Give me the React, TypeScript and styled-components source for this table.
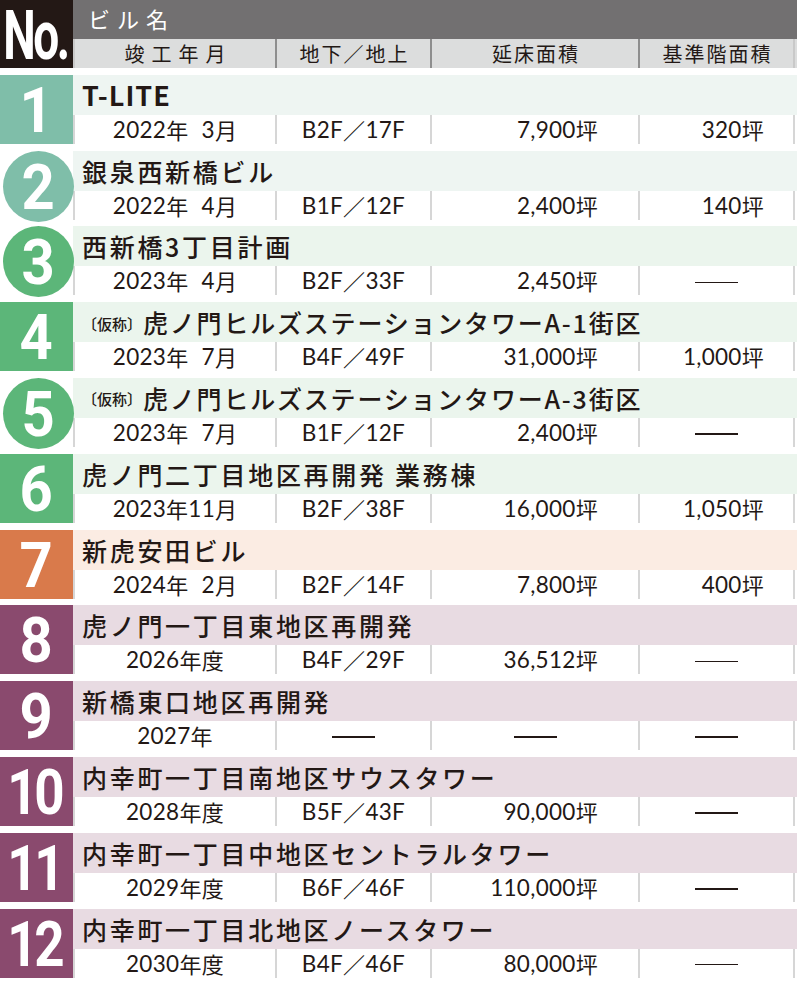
import React from 'react';
import styled, { createGlobalStyle } from 'styled-components';

const GlobalStyle = createGlobalStyle`
  html, body { margin: 0; padding: 0; background: #ffffff; }
  body {
    font-family: "Noto Sans CJK JP", "Noto Sans", sans-serif;
    color: #231815;
  }
`;

type Tone = 'teal' | 'green' | 'orange' | 'purple';

const palette: Record<Tone, { solid: string; tint: string }> = {
  teal: { solid: '#7fbea9', tint: '#eef5f2' },
  green: { solid: '#5cb679', tint: '#ebf5ed' },
  orange: { solid: '#d97a4b', tint: '#fbece3' },
  purple: { solid: '#8a4a6e', tint: '#e8dbe2' },
};

const COLS = '202px 155px 208px 157px';

const Table = styled.div`
  width: 797px;
  display: flex;
  flex-direction: column;
`;

const Header = styled.div`
  display: grid;
  grid-template-columns: 73px 724px;
  height: 68px;
`;

const NoCell = styled.div`
  background: #231815;
  display: flex;
  align-items: flex-end;
  justify-content: center;
  box-sizing: border-box;
`;

const NoText = styled.span`
  display: inline-block;
  font-family: Roboto, "Liberation Sans", sans-serif;
  font-weight: 700;
  font-size: 46px;
  line-height: 0.9;
  color: #ffffff;
  letter-spacing: -2.5px;
  transform: scaleY(1.5);
  transform-origin: center bottom;
  white-space: nowrap;
  margin-left: -2px;
  padding-bottom: 1px;
`;

const HeadRight = styled.div`
  display: flex;
  flex-direction: column;
`;

const TopBar = styled.div`
  height: 39px;
  background: #727071;
  color: #ffffff;
  font-size: 22px;
  letter-spacing: 7px;
  padding-left: 15px;
  display: flex;
  align-items: center;
  padding-bottom: 3px;
  box-sizing: border-box;
`;

const SubHead = styled.div`
  display: grid;
  grid-template-columns: ${COLS};
  height: 29px;
  background: #dcdddd;
`;

const SubHeadCell = styled.div<{ $wide?: boolean }>`
  border-left: 2px solid #8e8e8e;
  display: flex;
  align-items: center;
  justify-content: center;
  font-size: 20px;
  letter-spacing: ${(p) => (p.$wide ? '7px' : '2px')};
  padding-left: ${(p) => (p.$wide ? '7px' : '2px')};
  &:first-child { border-left-color: #c9c9c9; }
  &:last-child { border-right: 2px solid #c9c9c9; }
`;

const Rows = styled.div`
  display: flex;
  flex-direction: column;
  gap: 6.8px;
  padding-top: 6.8px;
`;

const Row = styled.div`
  display: grid;
  grid-template-columns: 73px 724px;
  height: 69px;
`;

const BadgeCell = styled.div<{ $tone: Tone; $circle: boolean }>`
  position: relative;
  z-index: 1;
  background: ${(p) => (p.$circle ? 'transparent' : palette[p.$tone].solid)};
  display: flex;
  align-items: center;
  justify-content: ${(p) => (p.$circle ? 'flex-start' : 'center')};
`;

const Circle = styled.div<{ $tone: Tone }>`
  width: 71px;
  height: 71px;
  flex: none;
  margin-left: 3px;
  border-radius: 50%;
  background: ${(p) => palette[p.$tone].solid};
  display: flex;
  align-items: center;
  justify-content: center;
`;

const Num = styled.span<{ $double: boolean }>`
  display: inline-block;
  font-family: Roboto, "Liberation Sans", sans-serif;
  font-weight: 700;
  font-size: 63px;
  line-height: 1;
  color: #ffffff;
  letter-spacing: ${(p) => (p.$double ? '-4px' : '0')};
  transform: ${(p) => (p.$double ? 'scaleX(0.84)' : 'scaleX(0.92)')};
  margin-left: ${(p) => (p.$double ? '-4px' : '0')};
  padding-top: 2px;
`;

const Main = styled.div`
  display: flex;
  flex-direction: column;
`;

const Title = styled.div<{ $tone: Tone; $tight?: boolean; $latin?: boolean }>`
  height: 40px;
  background: ${(p) => palette[p.$tone].tint};
  padding-left: 9px;
  display: flex;
  align-items: center;
  font-size: ${(p) => (p.$latin ? '27px' : '25px')};
  font-weight: ${(p) => (p.$latin ? 700 : 500)};
  letter-spacing: ${(p) => (p.$latin ? '1px' : p.$tight ? '1.8px' : '2.7px')};
  white-space: nowrap;
`;

const Prefix = styled.span`
  font-size: 15px;
  letter-spacing: 0;
  margin-right: 1px;
  padding-top: 2px;
`;

const SubRow = styled.div`
  display: grid;
  grid-template-columns: ${COLS};
  height: 29px;
  background: #ffffff;
`;

const Cell = styled.div<{ $right?: number }>`
  border-left: 2px solid #d6d6d6;
  display: flex;
  align-items: center;
  justify-content: ${(p) => (p.$right !== undefined ? 'flex-end' : 'center')};
  padding-right: ${(p) => (p.$right !== undefined ? `${p.$right}px` : '0')};
  font-family: Lato, "Noto Sans CJK JP", sans-serif;
  font-size: 22.5px;
  line-height: 29px;
  letter-spacing: 0.3px;
  white-space: nowrap;
  &:last-child { border-right: 2px solid #d6d6d6; }
`;

const Kanji = styled.span`
  font-family: "Noto Sans CJK JP", sans-serif;
  font-size: 22px;
`;

const Spacer = styled.span`
  display: inline-block;
  width: 13px;
`;

const Dash = styled.span`
  display: inline-block;
  width: 43px;
  height: 1.5px;
  background: #231815;
  margin-top: 3px;
`;

type RowData = {
  n: number;
  tone: Tone;
  circle?: boolean;
  prefix?: string;
  latin?: boolean;
  title: string;
  year: string;
  month?: string;
  suffix?: string;
  floors?: string;
  total?: string;
  std?: string;
};

const rows: RowData[] = [
  { n: 1, tone: 'teal', latin: true, title: 'T-LITE', year: '2022', month: '3', floors: 'B2F／17F', total: '7,900', std: '320' },
  { n: 2, tone: 'teal', circle: true, title: '銀泉西新橋ビル', year: '2022', month: '4', floors: 'B1F／12F', total: '2,400', std: '140' },
  { n: 3, tone: 'green', circle: true, title: '西新橋3丁目計画', year: '2023', month: '4', floors: 'B2F／33F', total: '2,450' },
  { n: 4, tone: 'green', prefix: '〔仮称〕', title: '虎ノ門ヒルズステーションタワーA-1街区', year: '2023', month: '7', floors: 'B4F／49F', total: '31,000', std: '1,000' },
  { n: 5, tone: 'green', circle: true, prefix: '〔仮称〕', title: '虎ノ門ヒルズステーションタワーA-3街区', year: '2023', month: '7', floors: 'B1F／12F', total: '2,400' },
  { n: 6, tone: 'green', title: '虎ノ門二丁目地区再開発 業務棟', year: '2023', month: '11', floors: 'B2F／38F', total: '16,000', std: '1,050' },
  { n: 7, tone: 'orange', title: '新虎安田ビル', year: '2024', month: '2', floors: 'B2F／14F', total: '7,800', std: '400' },
  { n: 8, tone: 'purple', title: '虎ノ門一丁目東地区再開発', year: '2026', suffix: '年度', floors: 'B4F／29F', total: '36,512' },
  { n: 9, tone: 'purple', title: '新橋東口地区再開発', year: '2027', suffix: '年' },
  { n: 10, tone: 'purple', title: '内幸町一丁目南地区サウスタワー', year: '2028', suffix: '年度', floors: 'B5F／43F', total: '90,000' },
  { n: 11, tone: 'purple', title: '内幸町一丁目中地区セントラルタワー', year: '2029', suffix: '年度', floors: 'B6F／46F', total: '110,000' },
  { n: 12, tone: 'purple', title: '内幸町一丁目北地区ノースタワー', year: '2030', suffix: '年度', floors: 'B4F／46F', total: '80,000' },
];

const Floors: React.FC<{ v: string }> = ({ v }) => {
  const [a, b] = v.split('／');
  return (
    <>
      {a}
      <Kanji>／</Kanji>
      {b}
    </>
  );
};

const Area: React.FC<{ v: string }> = ({ v }) => (
  <>
    {v}
    <Kanji>坪</Kanji>
  </>
);

const DateText: React.FC<{ r: RowData }> = ({ r }) => {
  if (r.month) {
    return (
      <>
        {r.year}
        <Kanji>年</Kanji>
        {r.month.length === 1 && <Spacer />}
        {r.month}
        <Kanji>月</Kanji>
      </>
    );
  }
  return (
    <>
      {r.year}
      <Kanji>{r.suffix}</Kanji>
    </>
  );
};

export default function App() {
  return (
    <>
      <GlobalStyle />
      <Table>
        <Header>
          <NoCell>
            <NoText>No.</NoText>
          </NoCell>
          <HeadRight>
            <TopBar>ビル名</TopBar>
            <SubHead>
              <SubHeadCell $wide>竣工年月</SubHeadCell>
              <SubHeadCell>地下／地上</SubHeadCell>
              <SubHeadCell>延床面積</SubHeadCell>
              <SubHeadCell>基準階面積</SubHeadCell>
            </SubHead>
          </HeadRight>
        </Header>
        <Rows>
          {rows.map((r) => (
            <Row key={r.n}>
              <BadgeCell $tone={r.tone} $circle={!!r.circle}>
                {r.circle ? (
                  <Circle $tone={r.tone}>
                    <Num $double={false}>{r.n}</Num>
                  </Circle>
                ) : (
                  <Num $double={r.n >= 10}>{r.n}</Num>
                )}
              </BadgeCell>
              <Main>
                <Title $tone={r.tone} $tight={!!r.prefix} $latin={!!r.latin}>
                  {r.prefix && <Prefix>{r.prefix}</Prefix>}
                  {r.title}
                </Title>
                <SubRow>
                  <Cell>
                    <DateText r={r} />
                  </Cell>
                  <Cell>{r.floors ? <Floors v={r.floors} /> : <Dash />}</Cell>
                  {r.total ? (
                    <Cell $right={40}>
                      <Area v={r.total} />
                    </Cell>
                  ) : (
                    <Cell>
                      <Dash />
                    </Cell>
                  )}
                  {r.std ? (
                    <Cell $right={29}>
                      <Area v={r.std} />
                    </Cell>
                  ) : (
                    <Cell>
                      <Dash />
                    </Cell>
                  )}
                </SubRow>
              </Main>
            </Row>
          ))}
        </Rows>
      </Table>
    </>
  );
}
